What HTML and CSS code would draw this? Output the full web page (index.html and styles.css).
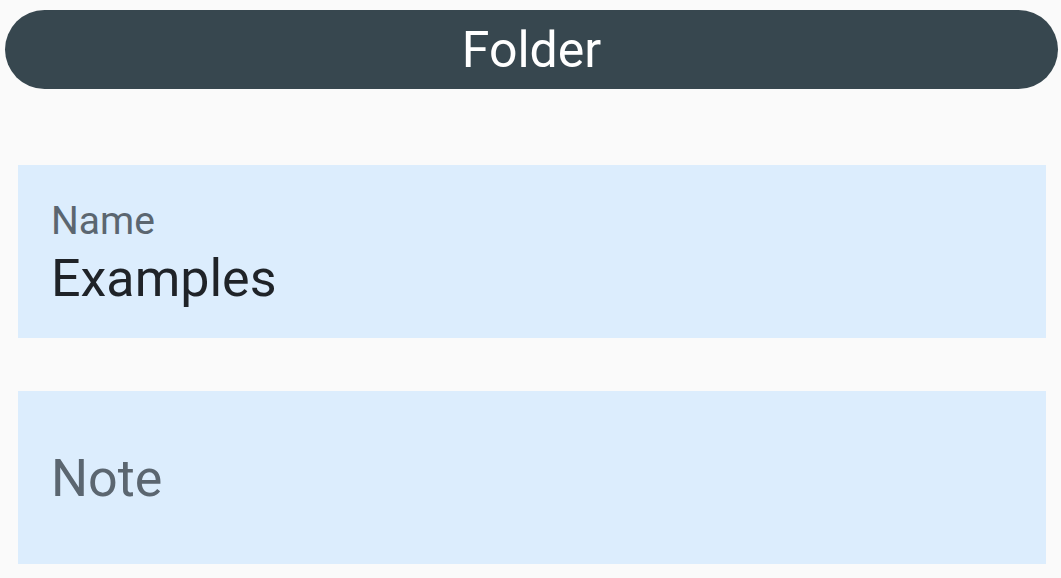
FILE: index.html
```html
<!DOCTYPE html>
<html>
<head>
<meta charset="utf-8">
<link rel="stylesheet" href="styles.css">
</head>
<body>
<div class="page">
  <header class="title-bar">Folder</header>
  <div class="form">
    <div class="field filled">
      <div class="label">Name</div>
      <div class="value">Examples</div>
    </div>
    <div class="field empty">
      <div class="placeholder">Note</div>
    </div>
  </div>
</div>
</body>
</html>
```
FILE: styles.css
```css
html, body {
  margin: 0;
  padding: 0;
  background: #fafafa;
  font-family: Roboto, "Noto Sans", sans-serif;
}
.page {
  width: 1061px;
  height: 578px;
  overflow: hidden;
  padding-top: 10px;
  box-sizing: border-box;
}
.title-bar {
  margin: 0 3px 0 5px;
  height: 79px;
  border-radius: 40px;
  background: #37474f;
  color: #ffffff;
  font-size: 50px;
  line-height: 80px;
  text-align: center;
}
.form {
  display: flex;
  flex-direction: column;
  gap: 53px;
  margin: 76px 15px 0 18px;
}
.field {
  height: 173px;
  background: #dcedfd;
  box-sizing: border-box;
  padding-left: 33px;
}
.filled {
  padding-top: 37px;
}
.label {
  font-size: 39px;
  line-height: 39px;
  color: #5b6670;
}
.value {
  margin-top: 12px;
  font-size: 52px;
  line-height: 52px;
  color: #1f2328;
}
.empty {
  display: flex;
  align-items: center;
  padding-top: 2px;
}
.placeholder {
  font-size: 52px;
  line-height: 52px;
  color: #5b6670;
}
```
